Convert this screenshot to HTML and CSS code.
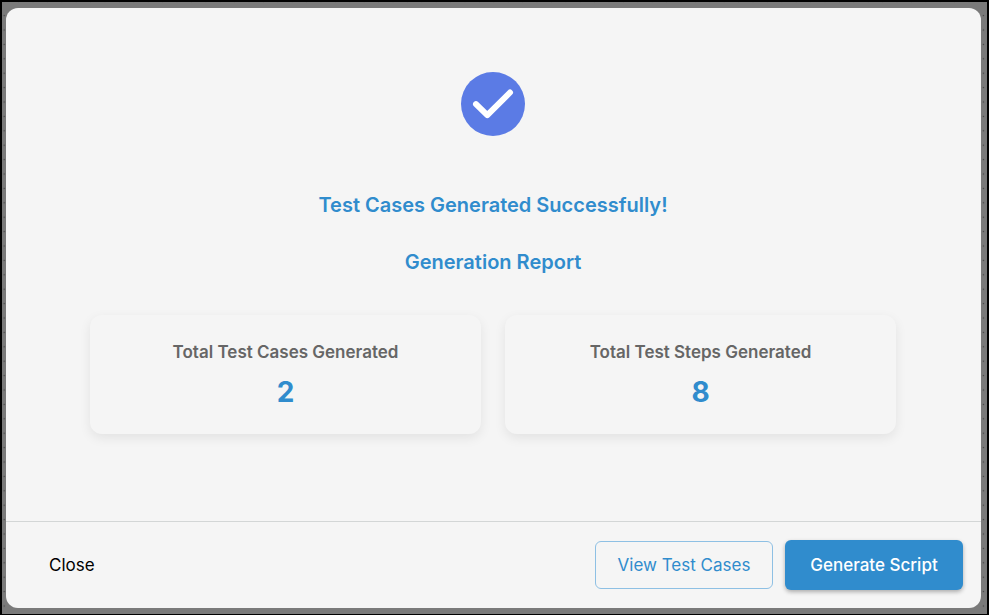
FILE: index.html
```html
<!DOCTYPE html>
<html lang="en">
<head>
<meta charset="utf-8">
<meta name="viewport" content="width=device-width, initial-scale=1">
<title>Generation Report</title>
<link rel="stylesheet" href="styles.css">
</head>
<body>
<div class="backdrop">
  <svg class="dots" aria-hidden="true">
    <defs>
      <pattern id="dot-grid" x="-5" y="-8" width="14.4" height="14.4" patternUnits="userSpaceOnUse">
        <circle cx="7.2" cy="7.2" r="0.7" fill="#444"/>
      </pattern>
    </defs>
    <rect width="100%" height="100%" fill="url(#dot-grid)"/>
  </svg>
  <div class="dialog" role="dialog" aria-labelledby="dialog-title">
    <main class="content">
      <svg class="success-icon" viewBox="0 0 64 64" aria-hidden="true">
        <circle cx="32" cy="32" r="32" fill="#5b7be5"/>
        <path d="M15 32.2L26.3 43.2L49 20.5" fill="none" stroke="#fff" stroke-width="6" stroke-linecap="round" stroke-linejoin="round"/>
      </svg>
      <h1 class="heading" id="dialog-title">Test Cases Generated Successfully!</h1>
      <h2 class="heading">Generation Report</h2>
      <div class="stats">
        <section class="card">
          <h3 class="card-label">Total Test Cases Generated</h3>
          <p class="card-value">2</p>
        </section>
        <section class="card">
          <h3 class="card-label">Total Test Steps Generated</h3>
          <p class="card-value">8</p>
        </section>
      </div>
    </main>
    <footer class="actions">
      <button class="button button-text" type="button">Close</button>
      <button class="button button-outlined" type="button">View Test Cases</button>
      <button class="button button-filled" type="button">Generate Script</button>
    </footer>
  </div>
</div>
</body>
</html>
```
FILE: styles.css
```css
* {
  box-sizing: border-box;
}

body {
  margin: 0;
  font-family: Inter, "Liberation Sans", sans-serif;
  color: #000;
}

.backdrop {
  position: relative;
  display: flex;
  min-height: 100vh;
  padding: 6px 6px 6px 4px;
  border: 2px solid #000;
  border-bottom-width: 1px;
  background: #7a7a7a;
}

.dots {
  position: absolute;
  inset: 0;
  width: 100%;
  height: 100%;
}

.dialog {
  position: relative;
  display: flex;
  flex: 1;
  flex-direction: column;
  border-radius: 12px;
  background: #f5f5f5;
}

.content {
  display: flex;
  flex: 1;
  flex-direction: column;
  align-items: center;
  padding: 64px 85px 0 84px;
}

.success-icon {
  width: 64px;
  height: 64px;
  margin-bottom: 53px;
}

.heading {
  margin: 0 0 25px;
  color: #308ccd;
  font-size: 20px;
  font-weight: 600;
  line-height: 32px;
}

.stats {
  display: grid;
  grid-template-columns: 1fr 1fr;
  gap: 24px;
  width: 100%;
  margin-top: 12px;
}

.card {
  padding: 24px;
  border-radius: 12px;
  background: #f5f5f5;
  box-shadow: 0 4px 12px rgba(0, 0, 0, 0.08);
  text-align: center;
}

.card-label {
  margin: 0 0 10px;
  color: #666;
  font-size: 17px;
  font-weight: 600;
  line-height: 26px;
}

.card-value {
  margin: 0;
  color: #308ccd;
  font-size: 28px;
  font-weight: 700;
  line-height: 35px;
}

.actions {
  display: flex;
  align-items: center;
  gap: 12px;
  padding: 18px;
  border-top: 1px solid #d3d6d6;
}

.button {
  border: 0;
  border-radius: 6px;
  background: none;
  font-family: inherit;
  font-size: 17px;
  font-weight: 400;
  line-height: 26px;
}

.button-text {
  margin-right: auto;
  padding: 12px 25px;
  color: #000;
}

.button-outlined {
  min-width: 178px;
  padding: 10px 20px;
  border: 1px solid #8ec0e4;
  color: #308ccd;
}

.button-filled {
  min-width: 178px;
  padding: 12px 20px;
  background: #308ccd;
  box-shadow: 0 2px 4px rgba(0, 0, 0, 0.3);
  color: #fff;
  font-weight: 500;
}
```
